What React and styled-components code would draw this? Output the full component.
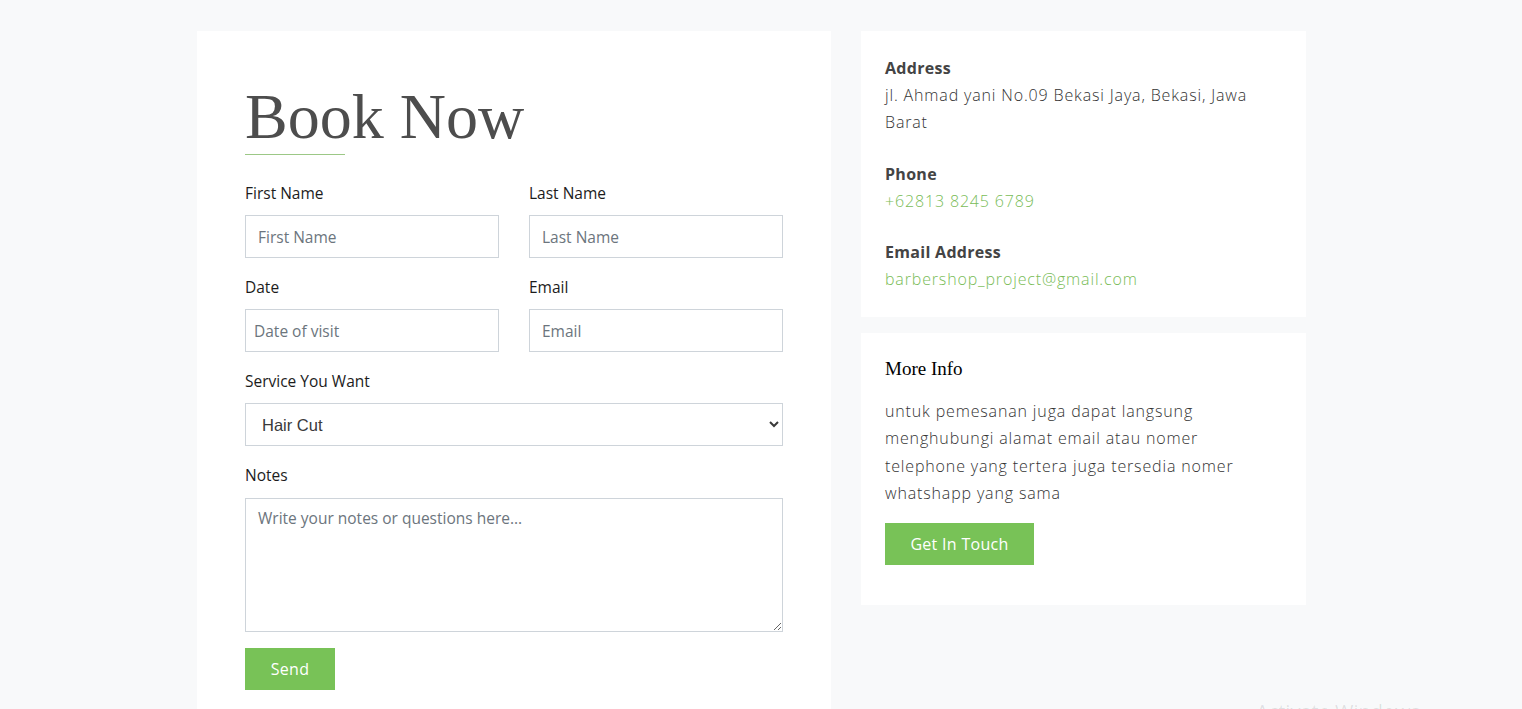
import React from 'react';
import styled, { createGlobalStyle } from 'styled-components';

const GlobalStyle = createGlobalStyle`
  * { box-sizing: border-box; }
  body {
    margin: 0;
    background: #f8f9fa;
    font-family: "Open Sans", "Liberation Sans", sans-serif;
    color: #212529;
    overflow: hidden;
  }
`;

const Page = styled.div`
  height: 709px;
  padding: 31px 0 0 197px;
  position: relative;
  overflow: hidden;
`;

const Row = styled.div`
  display: flex;
  align-items: flex-start;
  gap: 30px;
`;

const FormCard = styled.div`
  width: 634px;
  min-height: 720px;
  background: #fff;
  padding: 49px 48px 40px;
`;

const Title = styled.h1`
  margin: 0;
  font-family: "Liberation Serif", "DejaVu Serif", serif;
  font-weight: 400;
  font-size: 64px;
  line-height: 74px;
  color: #4d4d4d;
`;

const Underline = styled.div`
  width: 100px;
  height: 1px;
  background: #9cc886;
  margin: 0 0 27px;
`;

const Grid = styled.div`
  display: grid;
  grid-template-columns: 1fr 1fr;
  column-gap: 30px;
  row-gap: 18px;
`;

const Field = styled.div`
  grid-column: ${p => (p.full ? '1 / -1' : 'auto')};
  display: flex;
  flex-direction: column;
`;

const Label = styled.label`
  font-size: 15.5px;
  font-weight: 400;
  line-height: 22px;
  color: #1c1c1c;
  margin-bottom: 11px;
`;

const inputBase = `
  width: 100%;
  border: 1px solid #ced4da;
  border-radius: 0;
  background: #fff;
  font-family: "Open Sans", "Liberation Sans", sans-serif;
  font-size: 15.5px;
  color: #495057;
  outline: none;
  &::placeholder { color: #6c757d; }
`;

const Input = styled.input`
  ${inputBase}
  height: 43px;
  padding: 0 ${p => (p.tight ? 8 : 12)}px;
`;

const Select = styled.select`
  ${inputBase}
  height: 43px;
  padding: 0 12px;
  font-family: "Liberation Sans", Arial, sans-serif;
  font-size: 16.5px;
  color: #3a3a3a;
`;

const TextArea = styled.textarea`
  ${inputBase}
  height: 134px;
  margin-top: 1px;
  padding: 8px 12px;
  resize: vertical;
`;

const Button = styled.button`
  display: inline-block;
  width: ${p => p.w}px;
  height: 42px;
  border: none;
  border-radius: 0;
  background: #78c257;
  color: #fff;
  font-family: "Open Sans", "Liberation Sans", sans-serif;
  font-size: 16px;
  font-weight: 400;
  letter-spacing: 0.3px;
  cursor: pointer;
`;

const SendWrap = styled.div`
  margin-top: 16px;
`;

const Side = styled.div`
  width: 445px;
  display: flex;
  flex-direction: column;
  gap: 16px;
`;

const InfoCard = styled.div`
  background: #fff;
  padding: ${p => p.pad};
`;

const InfoBlock = styled.div`
  margin-bottom: ${p => p.gap || 0}px;
`;

const InfoTitle = styled.h4`
  margin: 0;
  font-size: 16px;
  font-weight: 700;
  letter-spacing: 0.3px;
  line-height: 27px;
  color: #444;
`;

const InfoText = styled.p`
  margin: 0;
  font-size: 16px;
  font-weight: 300;
  letter-spacing: 0.85px;
  line-height: 27px;
  color: ${p => (p.green ? '#79bc57' : '#333')};
`;

const MoreTitle = styled.h3`
  margin: 0 0 17px;
  font-family: "Liberation Serif", "DejaVu Serif", serif;
  font-weight: 400;
  font-size: 19px;
  line-height: 24px;
  color: #000;
`;

const MoreText = styled.p`
  margin: 0 0 16px;
  font-size: 16px;
  font-weight: 300;
  letter-spacing: 0.85px;
  line-height: 27.3px;
  color: #333;
`;

const Watermark = styled.div`
  position: absolute;
  left: 1256px;
  top: 698px;
  font-family: "Open Sans", sans-serif;
  font-size: 20px;
  color: rgba(0, 0, 0, 0.1);
  white-space: nowrap;
  pointer-events: none;
`;

export default function App() {
  return (
    <>
      <GlobalStyle />
      <Page>
        <Row>
          <FormCard>
            <Title>Book Now</Title>
            <Underline />
            <Grid>
              <Field>
                <Label>First Name</Label>
                <Input placeholder="First Name" />
              </Field>
              <Field>
                <Label>Last Name</Label>
                <Input placeholder="Last Name" />
              </Field>
              <Field>
                <Label>Date</Label>
                <Input tight placeholder="Date of visit" />
              </Field>
              <Field>
                <Label>Email</Label>
                <Input placeholder="Email" />
              </Field>
              <Field full>
                <Label>Service You Want</Label>
                <Select defaultValue="Hair Cut">
                  <option>Hair Cut</option>
                  <option>Shaving</option>
                  <option>Hair Coloring</option>
                </Select>
              </Field>
              <Field full>
                <Label>Notes</Label>
                <TextArea placeholder="Write your notes or questions here..." />
              </Field>
            </Grid>
            <SendWrap>
              <Button w={90}>Send</Button>
            </SendWrap>
          </FormCard>

          <Side>
            <InfoCard pad="24px 24px 24px">
              <InfoBlock gap={25}>
                <InfoTitle>Address</InfoTitle>
                <InfoText>jl. Ahmad yani No.09 Bekasi Jaya, Bekasi, Jawa Barat</InfoText>
              </InfoBlock>
              <InfoBlock gap={24}>
                <InfoTitle>Phone</InfoTitle>
                <InfoText green>+62813 8245 6789</InfoText>
              </InfoBlock>
              <InfoBlock>
                <InfoTitle>Email Address</InfoTitle>
                <InfoText green>barbershop_project@gmail.com</InfoText>
              </InfoBlock>
            </InfoCard>
            <InfoCard pad="24px 24px 40px">
              <MoreTitle>More Info</MoreTitle>
              <MoreText>
                untuk pemesanan juga dapat langsung menghubungi alamat email atau nomer telephone yang tertera juga tersedia nomer whatshapp yang sama
              </MoreText>
              <Button w={149}>Get In Touch</Button>
            </InfoCard>
          </Side>
        </Row>
        <Watermark>Activate Windows</Watermark>
      </Page>
    </>
  );
}
